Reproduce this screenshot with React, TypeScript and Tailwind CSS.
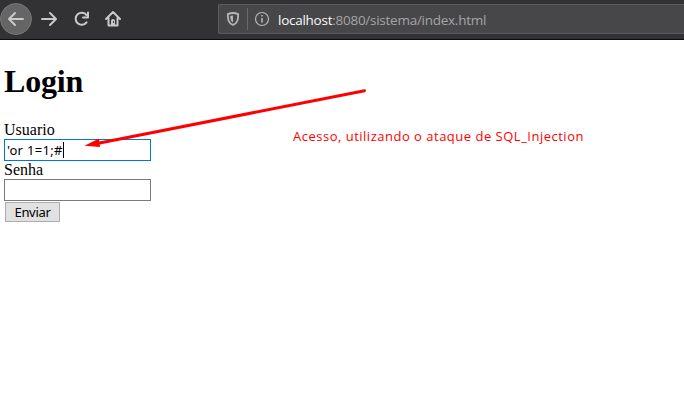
import React from 'react';

function Toolbar() {
  return (
    <header className="flex h-10 items-start overflow-hidden border-b border-[#0c0c0d] bg-[#323234]">
      <nav className="flex h-[39px] w-[218px] shrink-0 items-center">
        <svg width="136" height="39" viewBox="0 0 136 39" fill="none" stroke="#c9c9ca" strokeWidth="2" strokeLinecap="round" strokeLinejoin="round">
          <circle cx="16" cy="19" r="15.5" fill="#656566" stroke="#777778" strokeWidth="1" />
          <path d="M23 19H9M15 13l-6 6 6 6" />
          <path d="M42 19h14M50 13l6 6-6 6" />
          <path d="M86.5 15.2A6 6 0 1 0 86.5 22.3" />
          <path d="M88 12.500v5h-5" />
          <path d="M106 19l7-7 7 7M108.5 18v7.5h9V18" />
          <path d="M113 19a2 2 0 0 1 2 2v5h-4v-5a2 2 0 0 1 2-2z" fill="#c9c9ca" stroke="none" />
          <path d="M113.5 21.5v1" stroke="#323234" strokeWidth="1" />
        </svg>
      </nav>
      <div className="mt-1 flex h-[30px] flex-1 items-center rounded-l-[2px] border border-r-0 border-[#5c5c5e] bg-[#474749]">
        <svg className="shrink-0" width="59" height="28" viewBox="0 0 59 28" fill="none">
          <path d="M14 8c-2 0-3.7.5-5.2 1.1 0 5 .4 9.2 5.2 10.8 4.8-1.6 5.2-5.8 5.2-10.8C17.7 8.5 16 8 14 8z" stroke="#b6b6b8" strokeWidth="1.8" strokeLinejoin="round" />
          <path d="M14 10.5c-1.1 0-2 .2-2.8.5.1 3.2.7 5.2 2.8 6.5z" fill="#b6b6b8" />
          <path d="M28.5 3v22" stroke="#69696b" />
          <circle cx="43" cy="14" r="6.5" stroke="#b6b6b8" strokeWidth="1.2" />
          <path d="M43 13v4.5M43 10v1.5" stroke="#b6b6b8" strokeWidth="1.6" />
        </svg>
        <span className="mt-px whitespace-nowrap font-['Open_Sans','Noto_Sans',sans-serif] text-[13.5px] leading-5 tracking-[-0.26px] text-[#a4a4a6]">
          <span className="text-[#f9f9fa]">localhost</span>:8080/sistema/index.html
        </span>
      </div>
    </header>
  );
}

export default function App() {
  return (
    <div className="relative h-[408px] w-[684px] overflow-hidden bg-white font-['Liberation_Serif','Times_New_Roman',serif] text-black">
      <Toolbar />
      <main className="flex">
        <form className="w-[293px] pl-1 pt-[23px]" onSubmit={(e) => e.preventDefault()}>
          <h1 className="h-[58px] text-[32px] font-bold leading-[37px] tracking-[-0.2px]">Login</h1>
          <label className="block h-[18px] text-[16px] leading-[18px]">Usuario</label>
          <div className="flex h-[22px] w-[147px] items-center border border-[#0078d7] bg-white pl-[2px] font-['Noto_Sans',sans-serif] text-[13px] tracking-[0.3px]">
            <span className="mt-px whitespace-nowrap">&apos;or 1=1;#</span>
            <span className="h-4 w-px bg-black" />
          </div>
          <label className="block h-[18px] text-[16px] leading-[18px]">Senha</label>
          <div className="h-[22px] w-[147px] border border-[#7a7a7a] bg-white" />
          <button className="ml-px mt-px block h-5 w-[55px] border border-[#adadad] bg-[#e1e1e1] font-['Noto_Sans',sans-serif] text-[13px] leading-[18px] tracking-[-0.3px]">
            Enviar
          </button>
        </form>
        <p className="mt-[86px] whitespace-nowrap font-['Open_Sans','Noto_Sans',sans-serif] text-[13px] leading-5 tracking-[0.5px] text-[#ff0000]">
          Acesso, utilizando o ataque de SQL_Injection
        </p>
      </main>
      <svg className="absolute left-[80px] top-[80px]" width="295" height="75" viewBox="80 80 295 75">
        <path d="M97 143.5L364.5 90.7" stroke="#ff0000" strokeWidth="3" strokeLinecap="round" />
        <path d="M84.5 145.7L99 138.5L100 147z" fill="#ff0000" />
      </svg>
    </div>
  );
}
